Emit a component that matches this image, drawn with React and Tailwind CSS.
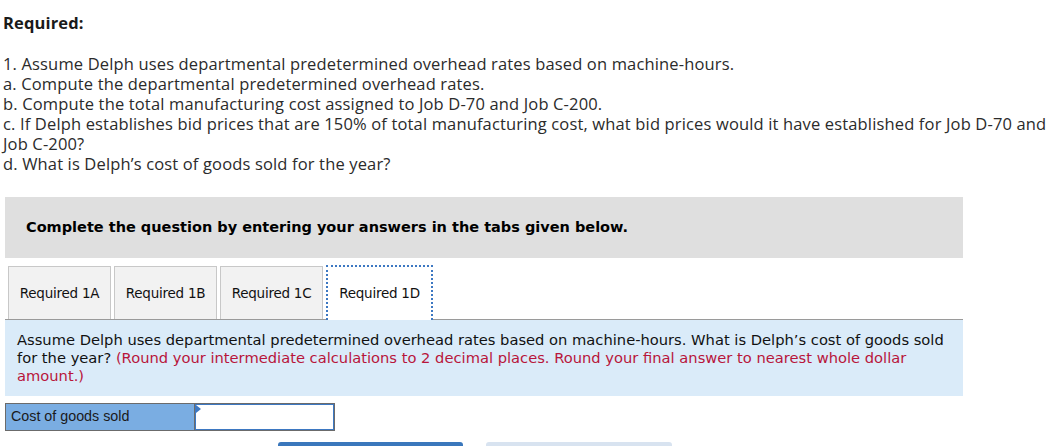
import React from "react";

const tabs = ["Required 1A", "Required 1B", "Required 1C", "Required 1D"];

export default function App() {
  return (
    <div className="w-[1064px] h-[446px] overflow-hidden bg-white relative">
      <div className="pl-[3px] pt-[13px] text-[16.5px] leading-[20px] text-[#2b2b2b] font-['Open_Sans','Liberation_Sans',sans-serif] tracking-[0.15px]">
        <div className="font-bold h-[21px] text-[#1a1a1a]">Required:</div>
        <div className="mt-[20px]">1. Assume Delph uses departmental predetermined overhead rates based on machine-hours.</div>
        <div>a. Compute the departmental predetermined overhead rates.</div>
        <div>b. Compute the total manufacturing cost assigned to Job D-70 and Job C-200.</div>
        <div className="w-[1058px]">
          c. If Delph establishes bid prices that are 150% of total manufacturing cost, what bid prices would it have established for Job D-70 and{" "}
          <span className="whitespace-nowrap">Job C-200?</span>
        </div>
        <div>d. What is Delph’s cost of goods sold for the year?</div>
      </div>

      <div className="ml-[5px] mt-[23px] w-[958px] h-[61px] bg-[#dfdfdf] flex items-center pl-[21px] font-['DejaVu_Sans','Verdana',sans-serif] font-bold text-[14.5px] text-black">
        Complete the question by entering your answers in the tabs given below.
      </div>

      <div className="ml-[5px] mt-[7px] w-[958px] flex items-end gap-[3px] pl-[3px] border-b border-[#9a9a9a] h-[55px] font-['DejaVu_Sans','Tahoma',sans-serif] text-[13.5px] tracking-[-0.25px] text-[#111]">
        {tabs.map((t, i) =>
          i === 3 ? (
            <div
              key={t}
              className="w-[107px] h-[55px] bg-white border-2 border-dotted border-[#3d78c2] border-b-0 flex items-center justify-center -mb-px"
            >
              {t}
            </div>
          ) : (
            <div
              key={t}
              className="w-[103px] h-[53px] bg-[#f2f2f2] border border-[#c8c8c8] border-b-0 flex items-center justify-center"
            >
              {t}
            </div>
          )
        )}
      </div>

      <div className="ml-[5px] w-[958px] h-[76px] bg-[#daebf9] pl-[12px] pr-[16px] pt-[11px] text-[14.7px] leading-[18px] font-['DejaVu_Sans','Verdana',sans-serif] text-[#111]">
        Assume Delph uses departmental predetermined overhead rates based on machine-hours. What is Delph’s cost of goods sold for the year?{" "}
        <span className="text-[#b8153b]">
          (Round your intermediate calculations to 2 decimal places. Round your final answer to nearest whole dollar amount.)
        </span>
      </div>

      <div className="ml-[5px] mt-[7px] flex h-[28px] border border-[#6b6b6b] w-[330px]">
        <div className="w-[189px] bg-[#7aade2] border-r border-[#6b6b6b] flex items-center pl-[5px] font-['Liberation_Sans',Arial,sans-serif] text-[14.3px] text-[#1a1a1a]">
          Cost of goods sold
        </div>
        <div className="flex-1 bg-white border border-[#3d78c2] relative">
          <div className="absolute left-0 top-0 w-0 h-0 border-t-[4px] border-b-[4px] border-l-[5px] border-t-transparent border-b-transparent border-l-[#3d78c2]" />
        </div>
      </div>

      <div className="flex gap-[23px] ml-[278px] mt-[11px]">
        <div className="w-[185px] h-[10px] bg-[#3a77bc] rounded-t-[3px]" />
        <div className="w-[186px] h-[10px] bg-[#d8e3f0] rounded-t-[3px]" />
      </div>
    </div>
  );
}
